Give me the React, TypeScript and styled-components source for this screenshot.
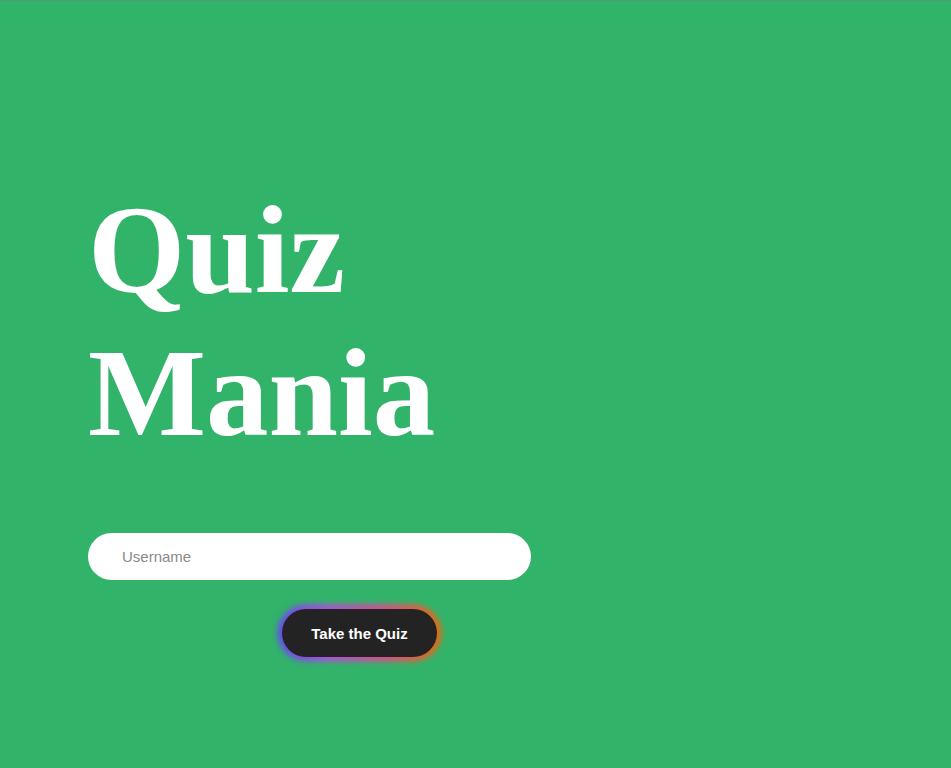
import React from "react";
import styled, { createGlobalStyle } from "styled-components";

const Global = createGlobalStyle`
  html, body { margin: 0; padding: 0; }
  body {
    background: #32b36a;
    border-top: 1px solid #4f9c74;
    font-family: "Liberation Sans", Arial, sans-serif;
  }
`;

const Page = styled.main`
  min-height: 767px;
  background: #32b36a;
  box-sizing: border-box;
  padding: 178px 0 0 88px;
  display: flex;
  flex-direction: column;
`;

const Title = styled.h1`
  margin: 0;
  font-family: "Liberation Serif", "Times New Roman", serif;
  font-weight: 700;
  font-size: 125px;
  line-height: 143px;
  color: #ffffff;
`;

const Form = styled.form`
  margin-top: 68px;
  width: 443px;
  display: flex;
  flex-direction: column;
`;

const Input = styled.input`
  height: 47px;
  border: none;
  outline: none;
  border-radius: 24px;
  background: #ffffff;
  padding: 0 0 0 34px;
  font-family: "Liberation Sans", Arial, sans-serif;
  font-size: 15px;
  color: #333;
  &::placeholder { color: #8a8a8a; }
`;

const GlowWrap = styled.div`
  margin-top: 29px;
  margin-left: 194px;
  position: relative;
  width: 155px;
  height: 48px;
  isolation: isolate;
  &::before {
    content: "";
    position: absolute;
    inset: -4px;
    border-radius: 30px;
    background: linear-gradient(90deg, #6a3cff 0%, #b745e6 30%, #e8428f 65%, #ff6200 100%);
    filter: blur(3px);
    z-index: -1;
  }
`;

const Button = styled.button`
  width: 100%;
  height: 100%;
  border: none;
  border-radius: 24px;
  background: #232323;
  color: #ffffff;
  font-family: "Liberation Sans", Arial, sans-serif;
  font-weight: 700;
  font-size: 15px;
  cursor: pointer;
`;

export default function App() {
  return (
    <>
      <Global />
      <Page>
        <Title>
          Quiz
          <br />
          Mania
        </Title>
        <Form onSubmit={(e) => e.preventDefault()}>
          <Input placeholder="Username" />
          <GlowWrap>
            <Button type="submit">Take the Quiz</Button>
          </GlowWrap>
        </Form>
      </Page>
    </>
  );
}
